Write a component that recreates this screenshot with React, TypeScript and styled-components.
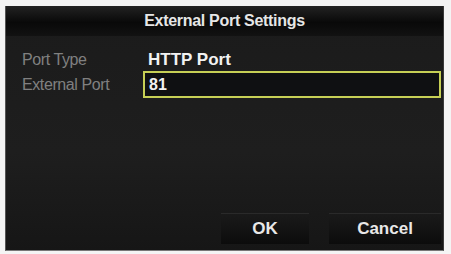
import React from 'react';
import styled, { createGlobalStyle } from 'styled-components';

const GlobalStyle = createGlobalStyle`
  html, body {
    margin: 0;
    padding: 0;
    background: #f4f4f4;
    font-family: "Liberation Sans", Arial, sans-serif;
  }
`;

const Screen = styled.div`
  width: 451px;
  height: 254px;
  padding: 6px 7px 4px 5px;
  box-sizing: border-box;
`;

const Dialog = styled.div`
  height: 100%;
  display: flex;
  flex-direction: column;
  background: linear-gradient(180deg, #1b1b1b 0%, #1e1e1e 60%, #161616 100%);
  border-left: 1px solid #555;
  border-right: 1px solid #3a3a3a;
  border-bottom: 1px solid #777;
`;

const TitleBar = styled.div`
  height: 30px;
  display: flex;
  align-items: center;
  justify-content: center;
  background: linear-gradient(180deg, #222 0%, #090909 55%, #121212 100%);
  color: #e6e6e6;
  font-size: 16px;
  font-weight: bold;
  letter-spacing: -0.3px;
`;

const Form = styled.div`
  display: flex;
  flex-direction: column;
  padding: 13px 2px 0 16px;
`;

const Row = styled.div<{ $height: number }>`
  display: grid;
  grid-template-columns: 121px 1fr;
  align-items: center;
  height: ${p => p.$height}px;
`;

const Label = styled.span`
  color: #808080;
  font-size: 16px;
  letter-spacing: -0.4px;
`;

const Value = styled.span`
  color: #f2f2f2;
  font-size: 17px;
  font-weight: bold;
  padding-left: 5px;
`;

const Input = styled.div`
  height: 100%;
  box-sizing: border-box;
  display: flex;
  align-items: center;
  padding-left: 4px;
  border: 2px solid #c6cf55;
  background: #0f1012;
  color: #f2f2f2;
  font-size: 16px;
  font-weight: bold;
`;

const Footer = styled.div`
  margin-top: auto;
  display: flex;
  justify-content: flex-end;
  gap: 20px;
  padding: 0 2px 6px 0;
`;

const Button = styled.div<{ $width: number }>`
  width: ${p => p.$width}px;
  height: 30px;
  display: flex;
  align-items: center;
  justify-content: center;
  background: linear-gradient(180deg, #1a1a1a 0%, #0c0c0c 100%);
  border-top: 1px solid #2a2a2a;
  color: #e8e8e8;
  font-size: 17px;
  font-weight: bold;
`;

const App: React.FC = () => {
  return (
    <Screen>
      <GlobalStyle />
      <Dialog>
        <TitleBar>External Port Settings</TitleBar>
        <Form>
          <Row $height={22}>
            <Label>Port Type</Label>
            <Value>HTTP Port</Value>
          </Row>
          <Row $height={27}>
            <Label>External Port</Label>
            <Input>81</Input>
          </Row>
        </Form>
        <Footer>
          <Button $width={88}>OK</Button>
          <Button $width={112}>Cancel</Button>
        </Footer>
      </Dialog>
    </Screen>
  );
};

export default App;
